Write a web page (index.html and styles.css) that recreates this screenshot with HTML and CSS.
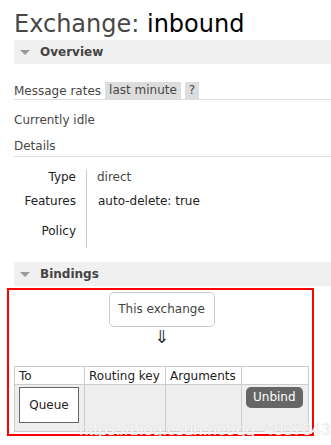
FILE: index.html
```html
<!DOCTYPE html>
<html lang="en">
<head>
    <meta charset="UTF-8">
    <meta name="viewport" content="width=device-width, initial-scale=1.0">
    <title>Exchange: inbound</title>
    <link rel="stylesheet" href="styles.css">
</head>
<body>
    <div class="page">
        <h1>Exchange: <b>inbound</b></h1>

        <div class="section-bar"><span class="arrow"></span>Overview</div>
        <div class="section-body">
            <div class="rates">
                Message rates <span class="pill">last minute</span> <span class="pill">?</span>
            </div>
            <p class="idle">Currently idle</p>
            <h3 class="sub">Details</h3>
            <table class="facts">
                <tr><th>Type</th><td>direct</td></tr>
                <tr><th>Features</th><td><span class="feature">auto-delete: true</span></td></tr>
                <tr><th>Policy</th><td></td></tr>
            </table>
        </div>

        <div class="section-bar"><span class="arrow"></span>Bindings</div>
        <div class="highlight">
            <div class="bindings">
                <div class="this-exchange">This exchange</div>
                <div class="down">&#8659;</div>
                <table class="list">
                    <thead>
                        <tr>
                            <th class="c-to">To</th>
                            <th class="c-key">Routing key</th>
                            <th class="c-args">Arguments</th>
                            <th class="c-act"></th>
                        </tr>
                    </thead>
                    <tbody>
                        <tr>
                            <td><span class="queue">Queue</span></td>
                            <td></td>
                            <td></td>
                            <td class="c-act"><button class="btn">Unbind</button></td>
                        </tr>
                    </tbody>
                </table>
            </div>
            <div class="watermark">https://blog.csdn.net/qq_40376439</div>
        </div>
    </div>
</body>
</html>
```

FILE: styles.css
```css
body {
    margin: 0;
    font-family: 'DejaVu Sans', Verdana, sans-serif;
    font-size: 12px;
    color: #484848;
    background: #fff;
}

.page {
    padding: 8px 0 0 14px;
}

h1 {
    margin: 0;
    font-size: 24px;
    font-weight: normal;
    line-height: 32px;
    color: #484848;
}

h1 b {
    font-weight: normal;
    color: #000;
}

.section-bar {
    height: 24px;
    line-height: 24px;
    background: #f0f0f0;
    font-weight: bold;
    font-size: 12px;
    color: #444;
    padding-left: 6px;
    display: flex;
    align-items: center;
}

.arrow {
    width: 0;
    height: 0;
    border-left: 5px solid transparent;
    border-right: 5px solid transparent;
    border-top: 5px solid #999;
    margin-right: 10px;
}

.section-body {
    padding-top: 18px;
    padding-bottom: 14px;
}

.rates {
    display: flex;
    align-items: center;
    gap: 4px;
    height: 17px;
    border-bottom: 1px solid #ddd;
}

.pill {
    background: #ddd;
    padding: 1px 4px;
    line-height: 15px;
}

.idle {
    margin: 13px 0 0;
    line-height: 15px;
}

.sub {
    margin: 11px 0 0;
    font-size: 12px;
    font-weight: normal;
    line-height: 15px;
    padding-bottom: 2px;
    border-bottom: 1px solid #ddd;
}

.facts {
    border-collapse: collapse;
    margin-top: 13px;
}

.facts th {
    width: 62px;
    text-align: right;
    font-weight: normal;
    color: #222;
    padding: 0 10px 0 0;
    border-right: 1px solid #ccc;
}

.facts td {
    padding: 0 0 0 10px;
    vertical-align: top;
}

.facts tr:nth-child(1) th,
.facts tr:nth-child(1) td {
    height: 22px;
    vertical-align: top;
}

.facts tr:nth-child(2) th,
.facts tr:nth-child(2) td {
    height: 30px;
    vertical-align: top;
    padding-top: 2px;
}

.facts tr:nth-child(3) th {
    height: 24px;
    vertical-align: top;
}

.feature {
    color: #222;
    padding-left: 1px;
}

.highlight {
    position: relative;
    margin: 2px 0 0 -7px;
    width: 303px;
    border: 2px solid #f00;
    padding-bottom: 2px;
}

.bindings {
    padding: 2px 3px 0 5px;
    display: flex;
    flex-direction: column;
    align-items: center;
}

.this-exchange {
    width: 104px;
    height: 33px;
    line-height: 33px;
    border: 1px solid #ccc;
    border-radius: 5px;
    text-align: center;
    font-size: 12px;
    color: #444;
}

.down {
    font-size: 18px;
    line-height: 20px;
    color: #333;
    margin-bottom: 19px;
}

.list {
    width: 295px;
    border-collapse: collapse;
    table-layout: fixed;
    font-size: 12px;
    color: #222;
}

.list th {
    font-weight: normal;
    text-align: left;
    height: 17px;
    padding: 0 4px;
    border: 1px solid #ccc;
    background: #fff;
    white-space: nowrap;
}

.list td {
    height: 42px;
    border: 1px solid #ccc;
    background: #eee;
    padding: 2px 4px;
    vertical-align: top;
}

.c-to { width: 61px; }
.c-key { width: 72px; }
.c-args { width: 67px; }

.queue {
    display: block;
    width: 58px;
    height: 34px;
    line-height: 34px;
    border: 1px solid #666;
    background: #fff;
    text-align: center;
}

.btn {
    font-family: inherit;
    font-size: 12px;
    background: #666;
    color: #fff;
    border: none;
    border-radius: 5px;
    padding: 1px 7px;
    line-height: 19px;
}

.watermark {
    position: absolute;
    left: 70px;
    bottom: -6px;
    font-family: 'Liberation Sans', Arial, sans-serif;
    font-size: 17px;
    color: rgba(255, 255, 255, 0.8);
    text-shadow: 0 0 1px #ccc;
    white-space: nowrap;
}
```
